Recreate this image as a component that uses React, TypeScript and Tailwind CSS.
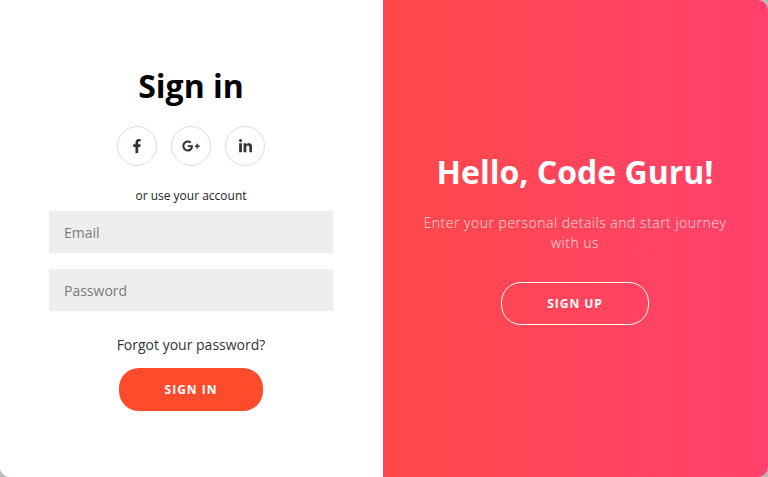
import { FaFacebookF, FaGooglePlusG, FaLinkedinIn } from "react-icons/fa";

const socials = [
  { label: "Facebook", icon: <FaFacebookF className="w-[14px] h-[14px]" /> },
  { label: "Google", icon: <FaGooglePlusG className="w-[18px] h-[18px]" /> },
  { label: "LinkedIn", icon: <FaLinkedinIn className="w-[15px] h-[15px]" /> },
];

export default function App() {
  return (
    <div className="bg-[#b9b9b9] w-[768px] h-[477px] overflow-hidden font-['Open_Sans',sans-serif]">
      <div className="flex bg-white rounded-[10px] rounded-tl-none w-full h-full overflow-hidden">
        {/* Sign in */}
        <form className="flex flex-col items-center bg-white pt-[64px] pr-[1px] w-[383px] text-center">
          <h1 className="font-bold text-[32px] text-black leading-[44px]">Sign in</h1>
          <div className="flex gap-[14px] mt-[18px]">
            {socials.map((s) => (
              <a
                key={s.label}
                aria-label={s.label}
                className="flex justify-center items-center border border-[#dddddd] rounded-full w-[40px] h-[40px] text-[#333333]"
              >
                {s.icon}
              </a>
            ))}
          </div>
          <span className="mt-[21px] text-[12px] text-[#222222] leading-[18px]">or use your account</span>
          <input
            placeholder="Email"
            className="bg-[#eeeeee] mt-[6px] px-[15px] outline-none w-[284px] h-[42px] text-[14px] placeholder:text-[#7a7a7a]"
          />
          <input
            placeholder="Password"
            className="bg-[#eeeeee] mt-[16px] px-[15px] outline-none w-[284px] h-[42px] text-[14px] placeholder:text-[#7a7a7a]"
          />
          <a className="mt-[24px] text-[#333333] text-[14px] leading-[19px]">Forgot your password?</a>
          <button
            type="button"
            className="bg-[#ff4b2b] mt-[14px] rounded-[20px] w-[144px] h-[43px] font-bold text-[12px] text-white tracking-[1px]"
          >
            SIGN IN
          </button>
        </form>

        {/* Sign up */}
        <div className="flex flex-col flex-1 items-center bg-gradient-to-r from-[#ff4848] to-[#ff416c] pt-[150px] pr-[1px] text-center text-white">
          <h1 className="font-bold text-[32px] leading-[44px]">Hello, Code Guru!</h1>
          <p className="opacity-80 mt-[19px] w-[325px] font-light text-[14px] tracking-[0.5px] leading-[20px]">
            Enter your personal details and start journey with us
          </p>
          <button
            type="button"
            className="mt-[29px] border border-white rounded-[20px] w-[148px] h-[43px] font-bold text-[12px] tracking-[1px]"
          >
            SIGN UP
          </button>
        </div>
      </div>
    </div>
  );
}
